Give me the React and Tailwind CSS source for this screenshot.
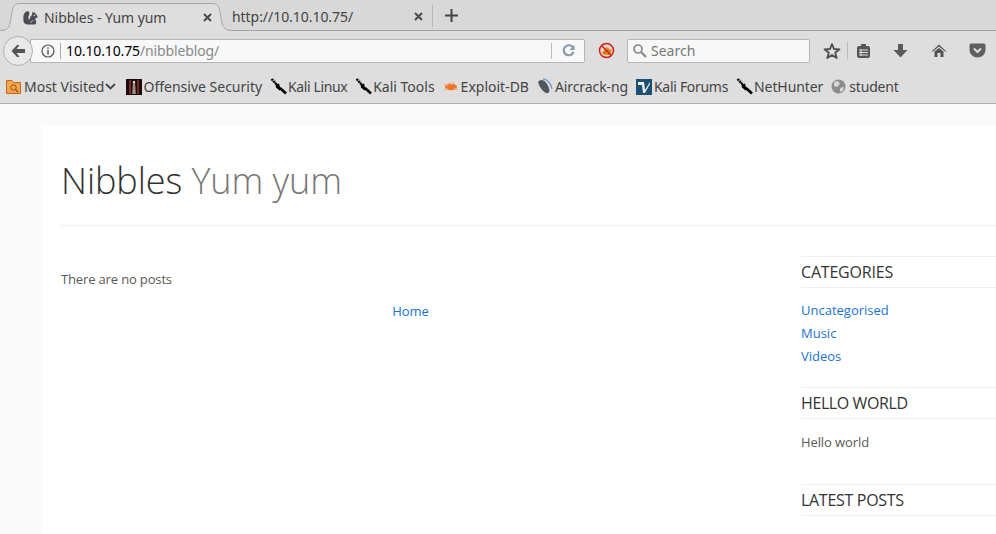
import React from "react";

const ui = { fontFamily: '"Noto Sans", "Open Sans", sans-serif' };
const site = { fontFamily: '"Open Sans", "Noto Sans", sans-serif' };

const CloseX = () => (
  <svg width="9" height="9" viewBox="0 0 9 9"><path d="M1 1 L8 8 M8 1 L1 8" stroke="#4a4a4a" strokeWidth="2" /></svg>
);

const Knife = () => (
  <svg width="17" height="17" viewBox="0 0 17 17" className="shrink-0">
    <path d="M1.5 1 L7 7" stroke="#000" strokeWidth="2.2" strokeDasharray="2 0.6" />
    <path d="M3 0.5 L6 3.5" stroke="#777" strokeWidth="0.8" />
    <path d="M5.5 6.5 L9 5.5 L10 9 L12 11 L9.5 12.5 L6 9.5 Z" fill="#000" />
    <path d="M10 10 L16 15.5" stroke="#000" strokeWidth="2.6" />
  </svg>
);

const Squirrel = () => (
  <svg width="15" height="15" viewBox="0 0 15 15" className="shrink-0">
    <path d="M5 14.5 C1.5 14.5 0 12 0.5 9 C0 6 1 2.5 3.5 1.5 C6 0.5 7 3 6 5 C5 7 5 9 6.5 10 C6.5 8 7.5 6 9 5 L9.5 1.5 L11 3 L12 2 L12.5 4 C14 5 15 6.5 14.5 7.5 L12.5 8 C12 9 12.5 10 13 11 C13.5 12.5 13 14 12 14.5 Z" fill="#4b4b52" />
    <circle cx="11.5" cy="5.5" r="0.8" fill="#dedede" />
    <path d="M7.5 13 C8.5 11 9.5 10.5 10.5 10.5" fill="none" stroke="#dedede" strokeWidth="0.8" />
  </svg>
);

function Bookmark({ icon, label, spacing }) {
  return (
    <div className="flex items-center gap-[1px] shrink-0">
      {icon}
      <span className={`text-[14px] leading-[18px] text-[#444] whitespace-nowrap ${spacing || ""}`}>{label}</span>
    </div>
  );
}

function Widget({ title, children, mb, spacing }) {
  return (
    <div className={mb}>
      <h3 className={`border-y border-[#f0f0f0] text-[16px] leading-[30px] h-[32px] text-[#333] ${spacing}`}>{title}</h3>
      {children}
    </div>
  );
}

export default function App() {
  return (
    <div className="w-[996px] h-[534px] overflow-hidden flex flex-col bg-[#fafafa]">
      <header style={ui} className="shrink-0">
        {/* Tab strip */}
        <div className="h-[31px] bg-[#d8d8d8] border-b border-[#a3a3a3] flex items-end relative">
          <div className="w-[232px] h-[28px] -mb-px flex items-center pl-[23px] pr-[20px] relative z-10 shrink-0">
            <svg width="232" height="29" viewBox="0 0 232 29" className="absolute left-0 top-0 -z-10">
              <path d="M0 28 C7 28 9 25 10 20 L12 9 C13 3 15 0.5 20 0.5 H212 C217 0.5 219 3 220 9 L222 20 C223 25 226 27.5 232 27.5 V29 H0 Z" fill="#dedede" />
              <path d="M0 27.5 C7 27.5 9 25 10 20 L12 9 C13 3 15 0.5 20 0.5 H212 C217 0.5 219 3 220 9 L222 20 C223 25 226 27.5 232 27.5" fill="none" stroke="#a8a8a8" />
            </svg>
            <Squirrel />
            <span className="ml-[6px] text-[14px] text-[#444] whitespace-nowrap tracking-[-0.05px]">Nibbles - Yum yum</span>
            <span className="ml-auto flex"><CloseX /></span>
          </div>
          <div className="w-[201px] h-[22px] flex items-center pr-[9px] border-r border-[#b8b8b8] mb-[3px] shrink-0">
            <span className="text-[14px] text-[#444] whitespace-nowrap tracking-[-0.05px]">http://10.10.10.75/</span>
            <span className="ml-auto flex"><CloseX /></span>
          </div>
          <div className="w-[37px] h-[28px] flex items-center justify-center mb-[1px] shrink-0">
            <svg width="13" height="13" viewBox="0 0 13 13"><path d="M6.5 0 V13 M0 6.5 H13" stroke="#444" strokeWidth="2" /></svg>
          </div>
        </div>

        {/* Nav bar */}
        <div className="h-[39px] bg-[#dedede] flex items-center relative pl-[30px]">
          <div className="absolute left-[3px] top-[5px] w-[30px] h-[30px] rounded-full bg-[#e9e9e9] border border-[#b0b0b0] flex items-center justify-center z-10">
            <svg width="16" height="14" viewBox="0 0 16 14"><path d="M7 1 L1.5 7 L7 13 H9.5 L6.5 9 H15 V5 H6.5 L9.5 1 Z" fill="#555" /></svg>
          </div>
          <div className="w-[555px] h-[24px] bg-[#f8f8f8] border border-[#b5b5b5] rounded-r-[2px] flex items-center pl-[10px]">
            <svg width="14" height="14" viewBox="0 0 14 14" className="shrink-0">
              <circle cx="7" cy="7" r="6" fill="none" stroke="#555" strokeWidth="1.2" />
              <path d="M7 6 V10.5 M7 3.2 V4.8" stroke="#555" strokeWidth="1.5" />
            </svg>
            <div className="w-px h-[16px] bg-[#aaa] ml-[5px] mr-[5px]" />
            <span className="text-[14px] text-black whitespace-nowrap tracking-[-0.13px]">10.10.10.75<span className="text-[#888]">/nibbleblog/</span></span>
            <div className="w-px h-[16px] bg-[#bbb] ml-auto" />
            <div className="w-[32px] flex justify-center">
              <svg width="13" height="13" viewBox="0 0 13 13"><path d="M11 3.5 A5 5 0 1 0 11.5 8" fill="none" stroke="#8a99a8" strokeWidth="2.2" /><path d="M12.5 1 V6 H7.5 Z" fill="#8a99a8" /></svg>
            </div>
          </div>
          <div className="w-[42px] flex justify-center">
            <svg width="17" height="17" viewBox="0 0 17 17">
              <circle cx="8.5" cy="8.5" r="7" fill="#e4d9c8" />
              <path d="M4 11 L8.5 5 L13.5 8 L12 13 L6 13 Z" fill="#e08a1e" />
              <path d="M5 11 L9 9 L12 11" fill="none" stroke="#a86a1c" strokeWidth="1" />
              <circle cx="8.5" cy="8.5" r="7" fill="none" stroke="#d41a1a" strokeWidth="1.5" />
              <path d="M3.5 3.5 L13.5 13.5" stroke="#d41a1a" strokeWidth="1.5" />
            </svg>
          </div>
          <div className="w-[183px] h-[24px] bg-[#f8f8f8] border border-[#b5b5b5] rounded-[2px] flex items-center pl-[4px] gap-[4px]">
            <svg width="15" height="15" viewBox="0 0 15 15"><circle cx="6" cy="6" r="4" fill="none" stroke="#8a8a8a" strokeWidth="1.7" /><path d="M9 9 L14 14" stroke="#8a8a8a" strokeWidth="2.2" /></svg>
            <span className="text-[14px] text-[#777]">Search</span>
          </div>
          <div className="ml-[13px] flex items-center">
            <svg width="18" height="18" viewBox="0 0 18 18"><path d="M9 2 L11 7 L16.5 7.3 L12.2 10.8 L13.7 16 L9 13.1 L4.3 16 L5.8 10.8 L1.5 7.3 L7 7 Z" fill="none" stroke="#4f4f4f" strokeWidth="1.8" strokeLinejoin="round" /></svg>
            <div className="w-px h-[18px] bg-[#bcbcbc] ml-[6px] mr-[8px]" />
            <svg width="15" height="16" viewBox="0 0 15 16"><rect x="1" y="3" width="13" height="12" rx="2" fill="#555" /><rect x="5" y="1" width="5" height="3" fill="#555" /><path d="M3 7 H12 M3 9.5 H12 M3 12 H12" stroke="#dedede" strokeWidth="1" /><path d="M5 6 V13" stroke="#dedede" strokeWidth="1" /></svg>
            <svg width="15" height="15" viewBox="0 0 15 15" className="ml-[22px]"><path d="M5 1 H10 V7 H14.5 L7.5 14.5 L0.5 7 H5 Z" fill="#5a5a5a" /></svg>
            <svg width="16" height="15" viewBox="0 0 16 15" className="ml-[23px]"><path d="M8 1.5 L15.5 8.5 L14 8.5 L8 3.5 L2 8.5 L0.5 8.5 Z" fill="#555" /><path d="M3.5 8.5 L8 5 L12.5 8.5 V14 H9.5 V10 H6.5 V14 H3.5 Z" fill="#555" /></svg>
            <svg width="17" height="15" viewBox="0 0 17 15" className="ml-[22px]"><path d="M2 0.5 H15 A1.5 1.5 0 0 1 16.5 2 V7 A8 7.5 0 0 1 0.5 7 V2 A1.5 1.5 0 0 1 2 0.5 Z" fill="#5e5e5e" /><path d="M5 5.5 L8.5 9 L12 5.5" fill="none" stroke="#dedede" strokeWidth="2" /></svg>
          </div>
        </div>

        {/* Bookmarks */}
        <div className="h-[34px] bg-[#dedede] border-b border-[#adadad] flex items-center pl-[6px] gap-[8px]">
          <div className="flex items-center gap-[3px] shrink-0 mr-[2px]">
            <svg width="15" height="15" viewBox="0 0 15 15" className="shrink-0"><path d="M0.5 1.5 H6 L7.5 3.5 H14.5 V14.5 H0.5 Z" fill="#f3a64d" stroke="#c9651a" /><circle cx="7.5" cy="8.5" r="2.7" fill="none" stroke="#a04d10" /><path d="M9.5 10.5 L12 13" stroke="#a04d10" strokeWidth="1.3" /></svg>
            <span className="text-[14px] leading-[18px] text-[#444] whitespace-nowrap">Most Visited</span>
            <svg width="11" height="7" viewBox="0 0 11 7" className="-ml-[2px]"><path d="M1 1 L5.5 5.5 L10 1" fill="none" stroke="#444" strokeWidth="1.8" /></svg>
          </div>
          <Bookmark label="Offensive Security" icon={
            <svg width="16" height="16" viewBox="0 0 16 16" className="shrink-0"><rect width="16" height="16" fill="#1b0d0c" /><rect x="3" y="1" width="2" height="14" fill="#7a2a22" /><rect x="11" y="1" width="2" height="14" fill="#7a2a22" /><path d="M7 2 H9 L9.5 15 H6.5 Z" fill="#e6dcd8" /><path d="M8 4 V15" stroke="#222" strokeWidth="0.8" /></svg>
          } />
          <Bookmark label="Kali Linux" spacing="tracking-[-0.4px]" icon={<Knife />} />
          <Bookmark label="Kali Tools" icon={<Knife />} />
          <Bookmark label="Exploit-DB" icon={
            <svg width="17" height="12" viewBox="0 0 17 12" className="shrink-0"><ellipse cx="8" cy="6" rx="6" ry="3.2" fill="#f0732a" /><path d="M1 3 L5 5 M1 9 L5 7 M15 9 L11 7 M6 1 L8 4 M11 1 L9 4" stroke="#f5a26a" strokeWidth="1" /></svg>
          } />
          <Bookmark label="Aircrack-ng" spacing="tracking-[-0.1px]" icon={
            <svg width="17" height="17" viewBox="0 0 17 17" className="shrink-0"><path d="M1 4 C3 1 7 1 10 6 C13 11 13 14 11 15 C8 16 3 11 1 4 Z" fill="#50585e" /><path d="M6 1 C10 1 14 5 15 11" fill="none" stroke="#7fa3c7" strokeWidth="1.5" /></svg>
          } />
          <Bookmark label="Kali Forums" spacing="tracking-[-0.3px]" icon={
            <svg width="17" height="16" viewBox="0 0 17 16" className="shrink-0"><rect width="16" height="16" fill="#1d4f72" /><path d="M2 3 H8 L9 11 L14 3 V5 L9 14 H7 L6 6 H2 Z" fill="#e8eef2" /></svg>
          } />
          <Bookmark label="NetHunter" spacing="tracking-[-0.1px]" icon={<Knife />} />
          <div className="flex items-center gap-[3px] shrink-0">
            <svg width="15" height="15" viewBox="0 0 15 15" className="shrink-0"><circle cx="7.5" cy="7.5" r="7" fill="#8c8c8c" /><path d="M3 3 L7 2 L9 5 L6 8 L3 7 Z M9 9 L13 8 L12 12 L9 13 Z" fill="#d6d6d6" /></svg>
            <span className="text-[14px] leading-[18px] text-[#444] tracking-[-0.15px]">student</span>
          </div>
        </div>
      </header>

      {/* Page */}
      <main style={site} className="flex-1 min-h-0 pt-[21px] pl-[41px]">
        <div className="h-full bg-white pl-[20px] overflow-hidden">
          <div className="h-[101px] border-b border-[#f0f0f0] flex items-start pt-[32px]">
            <h1 className="text-[36px] leading-[48px] font-light text-[#333] whitespace-nowrap tracking-[-0.07px]">
              Nibbles <span className="text-[#777]">Yum yum</span>
            </h1>
          </div>
          <div className="flex">
            <div className="w-[740px] shrink-0 pt-[44px] pr-[41px]">
              <p className="text-[13px] leading-[18px] text-[#5a5a5a] tracking-[-0.15px]">There are no posts</p>
              <p className="text-[13px] leading-[18px] text-center text-[#1a73d0] mt-[14px]">Home</p>
            </div>
            <aside className="flex-1 pt-[30px]">
              <Widget title="CATEGORIES" mb="mb-[19px]" spacing="tracking-[-0.2px]">
                <ul className="pt-[11px] text-[13px] leading-[23px] text-[#1a73d0]">
                  <li>Uncategorised</li>
                  <li>Music</li>
                  <li>Videos</li>
                </ul>
              </Widget>
              <Widget title="HELLO WORLD" mb="mb-[33px]" spacing="tracking-[-0.4px]">
                <p className="pt-[14px] text-[13px] leading-[18px] text-[#5a5a5a] tracking-[-0.1px]">Hello world</p>
              </Widget>
              <Widget title="LATEST POSTS" spacing="tracking-[-0.3px]" />
            </aside>
          </div>
        </div>
      </main>
    </div>
  );
}
